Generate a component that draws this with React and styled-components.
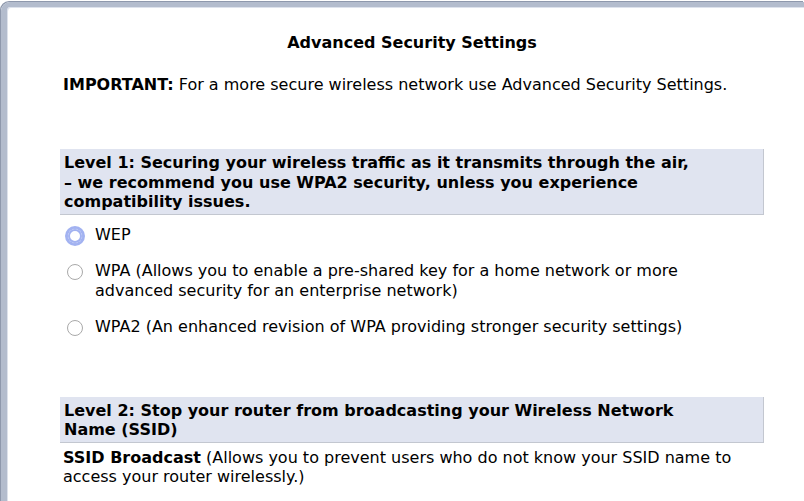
import React from 'react';
import styled, { createGlobalStyle } from 'styled-components';

const GlobalStyle = createGlobalStyle`
	html, body {
		margin: 0;
		padding: 0;
		background: #ffffff;
		overflow: hidden;
	}
`;

const Frame = styled.div`
	margin: 2px 0 0 1px;
	height: 520px;
	border-top: 5px solid #b3bccd;
	border-left: 6px solid #b3bccd;
	border-top-left-radius: 9px;
	box-shadow: -1px -1px 0 #8e98ac, inset 1px 1px 0 #dde2ec;
	font-family: Verdana, 'DejaVu Sans', sans-serif;
	font-size: 16px;
	line-height: 19.5px;
	color: #000;
`;

const Column = styled.div`
	width: 704px;
	margin-left: 53px;
	padding-top: 26px;
`;

const Title = styled.h1`
	margin: 0;
	font-size: 16px;
	font-weight: bold;
	text-align: center;
`;

const Notice = styled.p`
	margin: 22px 0 0 3px;
`;

const LevelBox = styled.div`
	margin-top: ${(p) => p.$gap}px;
	padding: 4px 4px 2px 4px;
	background: #e0e4f0;
	border-right: 1px solid #c3c7d0;
	border-bottom: 1px solid #c3c7d0;
	font-weight: bold;
`;

const Options = styled.div`
	display: flex;
	flex-direction: column;
	gap: 17px;
	padding: 10px 0 0 7px;
`;

const Option = styled.label`
	display: flex;
	align-items: flex-start;
	gap: 12px;
`;

const Radio = styled.span`
	flex: none;
	box-sizing: border-box;
	width: 16px;
	height: 16px;
	margin-top: 3px;
	border-radius: 50%;
	background: #fff;
	border: 1px solid #a9a9a9;
	box-shadow: ${(p) => (p.$focused ? '0 0 0 2px #a2b2f1, inset 0 0 0 2px #a2b2f1' : 'none')};
	${(p) => p.$focused && 'border-color: #a2b2f1;'}
`;

const Detail = styled.p`
	margin: 5px 0 0 3px;
`;

const Strong = styled.b`
	font-weight: bold;
`;

const options = [
	{ id: 'wep', focused: true, lines: ['WEP'] },
	{
		id: 'wpa',
		lines: [
			'WPA (Allows you to enable a pre-shared key for a home network or more',
			'advanced security for an enterprise network)',
		],
	},
	{
		id: 'wpa2',
		lines: ['WPA2 (An enhanced revision of WPA providing stronger security settings)'],
	},
];

const App = () => {
	return (
		<>
			<GlobalStyle />
			<Frame>
				<Column>
					<Title>Advanced Security Settings</Title>
					<Notice>
						<Strong>IMPORTANT:</Strong> For a more secure wireless network use Advanced
						Security Settings.
					</Notice>

					<LevelBox $gap={55}>
						Level 1: Securing your wireless traffic as it transmits through the air,
						<br />
						– we recommend you use WPA2 security, unless you experience
						<br />
						compatibility issues.
					</LevelBox>

					<Options>
						{options.map((o) => (
							<Option key={o.id}>
								<Radio $focused={o.focused} />
								<span>
									{o.lines.map((l, i) => (
										<React.Fragment key={i}>
											{i > 0 && <br />}
											{l}
										</React.Fragment>
									))}
								</span>
							</Option>
						))}
					</Options>

					<LevelBox $gap={60}>
						Level 2: Stop your router from broadcasting your Wireless Network
						<br />
						Name (SSID)
					</LevelBox>

					<Detail>
						<Strong>SSID Broadcast</Strong> (Allows you to prevent users who do not know
						your SSID name to
						<br />
						access your router wirelessly.)
					</Detail>
				</Column>
			</Frame>
		</>
	);
};

export default App;
